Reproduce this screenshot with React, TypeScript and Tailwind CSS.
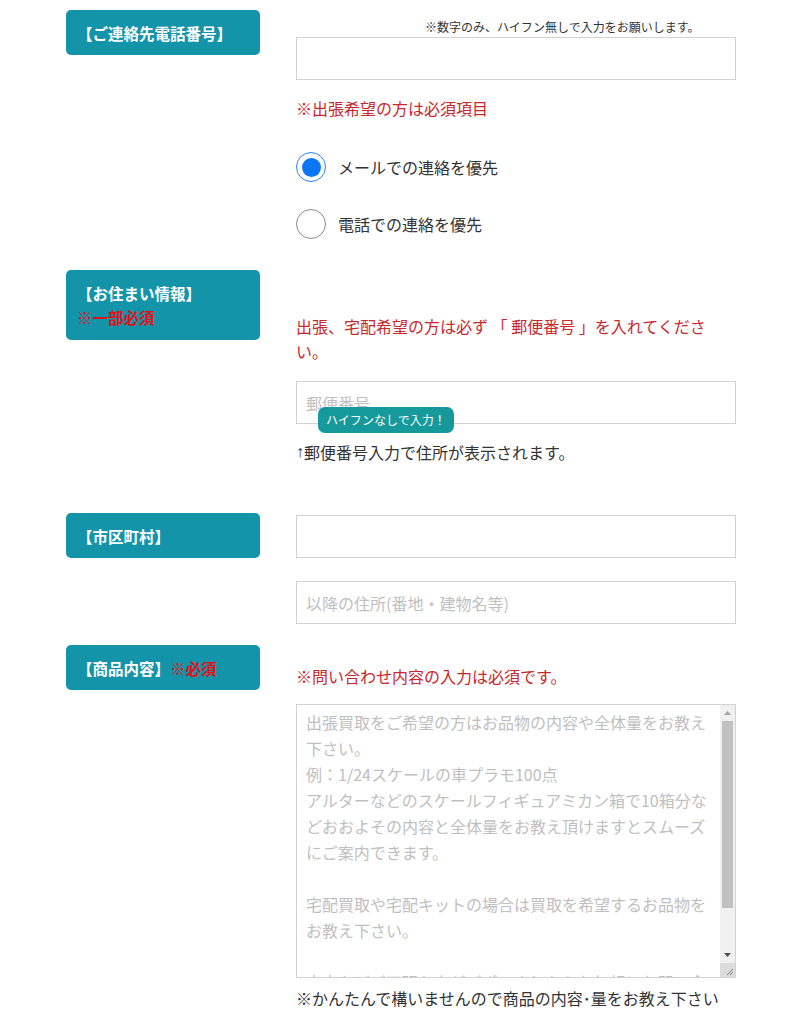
import React from "react";

const font = { fontFamily: '"Noto Sans CJK JP", "Noto Sans", sans-serif' };

function Label({ children, className = "" }: { children: React.ReactNode; className?: string }) {
  return (
    <div
      className={`flex flex-col justify-center rounded-[5px] bg-[#1494a8] pl-[11px] text-[15.5px] font-bold leading-[24px] text-white ${className}`}
    >
      {children}
    </div>
  );
}

function Radio({ checked, label }: { checked?: boolean; label: string }) {
  return (
    <div className="flex h-[30px] items-center">
      {checked ? (
        <span className="flex h-[30px] w-[30px] items-center justify-center rounded-full border-[1.5px] border-[#2a84f0] bg-white">
          <span className="h-[19px] w-[19px] rounded-full bg-[#0a76f5]" />
        </span>
      ) : (
        <span className="h-[30px] w-[30px] rounded-full border border-[#8a8a8a] bg-white" />
      )}
      <span className="ml-[12px] text-[16px] text-[#333]">{label}</span>
    </div>
  );
}

function Field({ placeholder, className = "" }: { placeholder?: string; className?: string }) {
  return (
    <div
      className={`flex h-[43px] w-[440px] items-center border border-[#d2d2d2] bg-white px-[9px] text-[16px] text-[#c0c0c0] ${className}`}
    >
      {placeholder}
    </div>
  );
}

const lines = [
  "出張買取をご希望の方はお品物の内容や全体量をお教え下さい。",
  "例：1/24スケールの車プラモ100点",
  "アルターなどのスケールフィギュアミカン箱で10箱分などおおよその内容と全体量をお教え頂けますとスムーズにご案内できます。",
  "",
  "宅配買取や宅配キットの場合は買取を希望するお品物をお教え下さい。",
  "",
  "査定などご不明な点がございましたらお気軽にお問い合わせ下さい。",
];

function TextBox() {
  return (
    <div className="flex h-[274px] w-[440px] border border-[#d2d2d2] bg-white">
      <div className="flex-1 overflow-hidden pl-[9px] pr-[6px] pt-[4px] text-[16px] leading-[26px] text-[#c0c0c0]">
        {lines.map((l, i) => (
          <div key={i} className="min-h-[26px]">
            {l}
          </div>
        ))}
      </div>
      <div className="flex w-[15px] flex-col bg-[#f1f1f1]">
        <div className="flex h-[16px] items-center justify-center">
          <svg width="7" height="4" viewBox="0 0 7 4">
            <path d="M0 4 L3.5 0 L7 4 Z" fill="#a3a3a3" />
          </svg>
        </div>
        <div className="mx-[2px] h-[187px] bg-[#c1c1c1]" />
        <div className="flex-1" />
        <div className="flex h-[16px] items-center justify-center">
          <svg width="7" height="4" viewBox="0 0 7 4">
            <path d="M0 0 L3.5 4 L7 0 Z" fill="#505050" />
          </svg>
        </div>
        <div className="flex h-[14px] items-end justify-end bg-[#dcdcdc] pb-[1px] pr-[1px]">
          <svg width="8" height="8" viewBox="0 0 8 8">
            <path d="M1 7 L7 1 M4 7 L7 4" stroke="#777" strokeWidth="1" />
          </svg>
        </div>
      </div>
    </div>
  );
}

export default function App() {
  return (
    <div className="min-h-[1024px] bg-white pb-[20px] pl-[66px]" style={font}>
      {/* 電話番号 */}
      <div className="mt-[10px] grid grid-cols-[194px_440px] gap-x-[36px]">
        <div>
          <Label className="h-[45px]">【ご連絡先電話番号】</Label>
        </div>
        <div>
          <div className="h-[27px] pl-[129px] pt-[7px] text-[12px] leading-[20px] text-[#333]">
            ※数字のみ、ハイフン無しで入力をお願いします。
          </div>
          <Field />
          <div className="mt-[17px] text-[16px] leading-[22px] text-[#c7282d]">※出張希望の方は必須項目</div>
          <div className="mt-[33px]">
            <Radio checked label="メールでの連絡を優先" />
          </div>
          <div className="mt-[27px]">
            <Radio label="電話での連絡を優先" />
          </div>
        </div>
      </div>

      {/* お住まい情報 */}
      <div className="mt-[31px] grid grid-cols-[194px_440px] gap-x-[36px]">
        <div>
          <Label className="h-[70px]">
            <span>【お住まい情報】</span>
            <span className="text-[#e01019]">※一部必須</span>
          </Label>
        </div>
        <div className="pt-[44px]">
          <div className="text-[16px] leading-[25px] text-[#c7282d]">
            出張、宅配希望の方は必ず 「 郵便番号 」を入れてください。
          </div>
          <div className="relative mt-[17px]">
            <Field placeholder="郵便番号" />
            <div className="absolute left-[22px] top-[26px] rounded-[7px] bg-[#16999a] px-[8px] text-[12px] leading-[26px] text-white">
              ハイフンなしで入力！
            </div>
          </div>
          <div className="mt-[17px] flex h-[22px] items-center overflow-hidden text-[16px] leading-[22px] text-[#333]">
            <span style={{ fontFamily: '"Liberation Sans", sans-serif' }}>↑</span>
            <span>郵便番号入力で住所が表示されます。</span>
          </div>
        </div>
      </div>

      {/* 市区町村 */}
      <div className="mt-[50px] grid grid-cols-[194px_440px] gap-x-[36px]">
        <div>
          <Label className="h-[45px]">【市区町村】</Label>
        </div>
        <div className="pt-[2px]">
          <Field />
          <Field placeholder="以降の住所(番地・建物名等)" className="mt-[23px]" />
        </div>
      </div>

      {/* 商品内容 */}
      <div className="mt-[21px] grid grid-cols-[194px_440px] gap-x-[36px]">
        <div>
          <Label className="h-[45px]">
            <span>
              【商品内容】<span className="text-[#e01019]">※必須</span>
            </span>
          </Label>
        </div>
        <div className="pt-[20px]">
          <div className="text-[16px] leading-[22px] text-[#c7282d]">※問い合わせ内容の入力は必須です。</div>
          <div className="mt-[17px]">
            <TextBox />
          </div>
          <div className="mt-[9px] text-[16px] leading-[22px] text-[#333]">
            ※かんたんで構いませんので商品の内容･量をお教え下さい
          </div>
        </div>
      </div>
    </div>
  );
}
